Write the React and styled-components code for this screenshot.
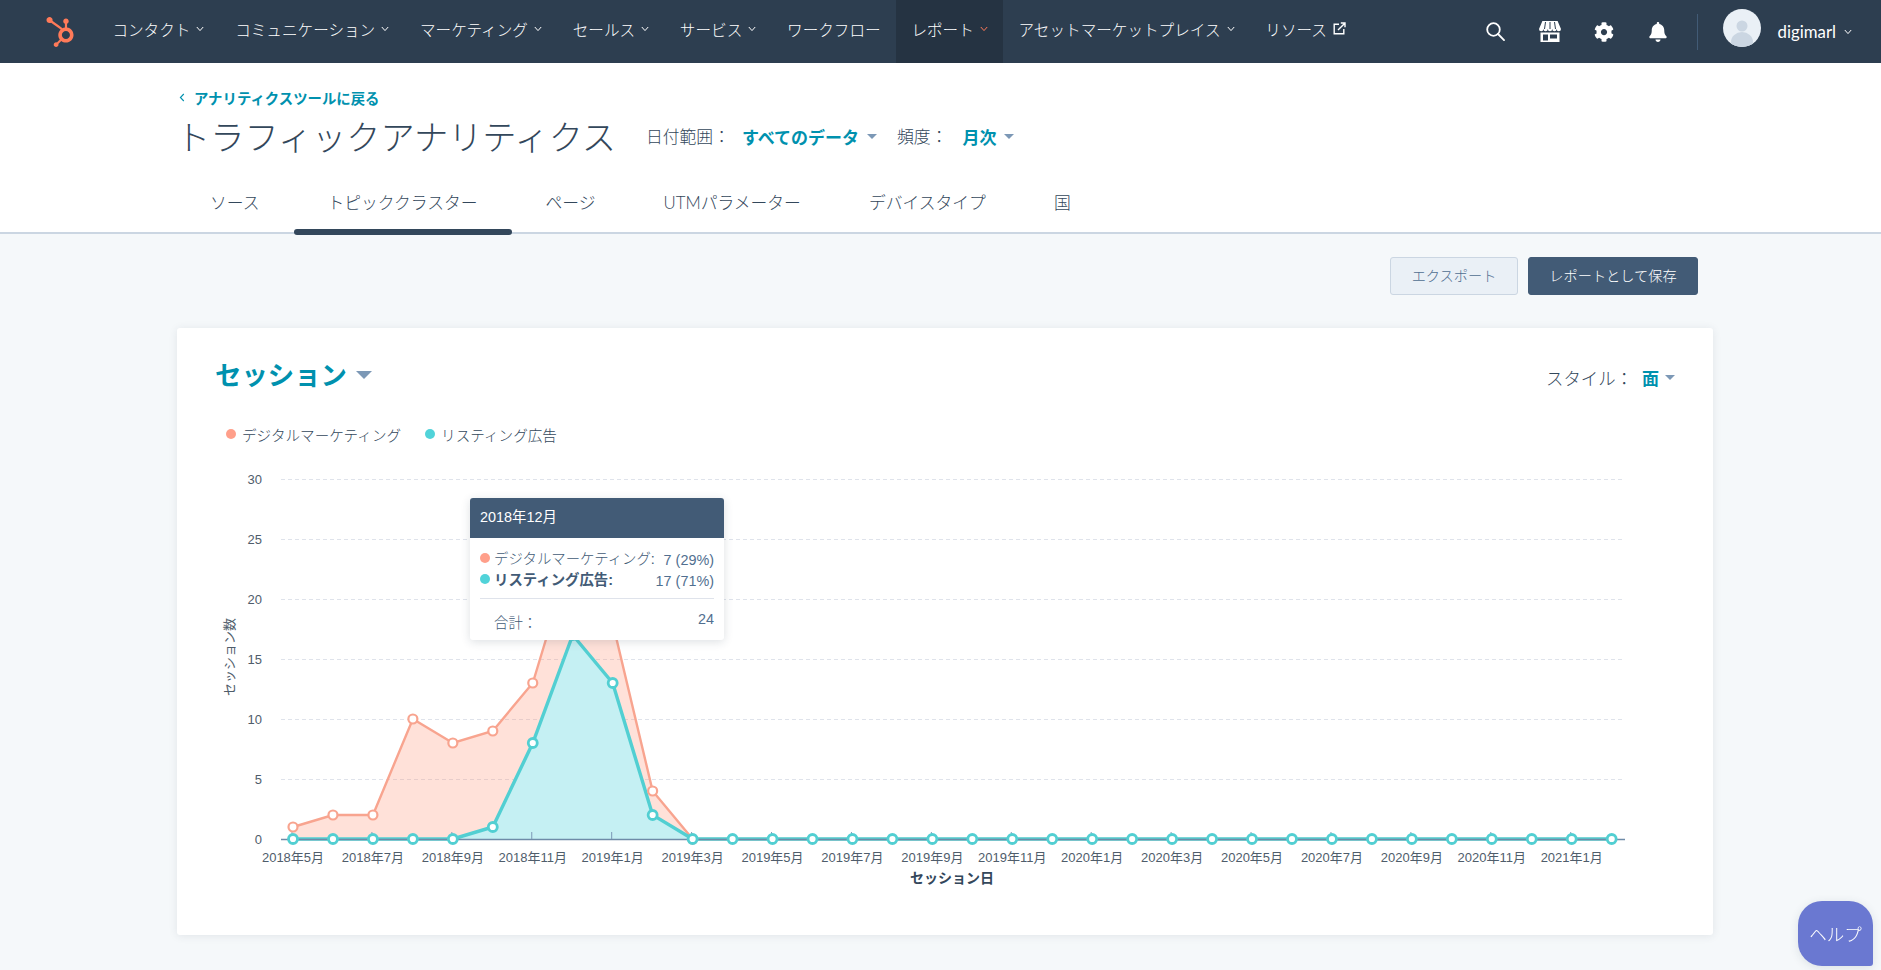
import React from 'react';
import styled, { createGlobalStyle } from 'styled-components';
import { FaHubspot, FaCog, FaBell } from 'react-icons/fa';

const JP = '"Lato", "Noto Sans CJK JP", sans-serif';
const CHART_FONT = '"Liberation Sans", "Noto Sans CJK JP", sans-serif';

const GlobalStyle = createGlobalStyle`
  html, body {
    margin: 0;
    padding: 0;
    background: #f5f8fa;
    color: #33475b;
    font-family: ${JP};
  }
`;

const Nav = styled.header`
  display: flex;
  align-items: stretch;
  height: 63px;
  background: #2d3e50;
  padding-left: 45px;
  padding-right: 29px;
`;

const Logo = styled.div`
  display: flex;
  align-items: center;
  width: 52px;
  color: #ff7a59;
  font-size: 30px;
`;

const NavItem = styled.a`
  display: flex;
  align-items: center;
  gap: 6px;
  padding: 0 15.4px 6px;
  color: #fff;
  font-size: 15.6px;
  font-weight: 300;
  white-space: nowrap;
  background: ${(p) => (p.$active ? '#253342' : 'transparent')};
`;

const NavRight = styled.div`
  display: flex;
  align-items: center;
  margin-left: auto;
`;

const IconButton = styled.span`
  display: flex;
  align-items: center;
  justify-content: center;
  width: 54px;
  color: #fff;
  font-size: 20px;
`;

const NavDivider = styled.span`
  width: 1px;
  height: 36px;
  margin: 0 25px 0 12px;
  background: #425b76;
`;

const AvatarBox = styled.span`
  display: block;
  height: 38px;
  margin-bottom: 7px;
`;

const UserName = styled.span`
  display: flex;
  align-items: center;
  gap: 8px;
  margin-left: 17px;
  color: #fff;
  font-size: 16.8px;
`;

const Head = styled.section`
  background: #fff;
  border-bottom: 2px solid #cbd6e2;
  padding: 25px 0 0 177px;
`;

const BackLink = styled.a`
  display: flex;
  align-items: center;
  gap: 9px;
  height: 18px;
  margin-left: 2px;
  color: #0091ae;
  font-size: 14.4px;
  font-weight: 700;
`;

const TitleRow = styled.div`
  display: flex;
  align-items: center;
  height: 46px;
  margin-top: 6px;
`;

const Title = styled.h1`
  margin: 0 30px 0 -1px;
  font-size: 34.2px;
  font-weight: 300;
  color: #33475b;
  white-space: nowrap;
`;

const FilterLabel = styled.span`
  padding-top: 2px;
  font-size: 16.8px;
  font-weight: 300;
  margin-right: ${(p) => p.$gap || 12}px;
`;

const FilterValue = styled.span`
  display: flex;
  align-items: center;
  gap: 8px;
  padding-top: 2px;
  margin-right: 20px;
  color: #0091ae;
  font-size: 17px;
  font-weight: 700;
`;

const Caret = styled.i`
  display: block;
  width: 0;
  height: 0;
  border-left: ${(p) => p.$size || 5}px solid transparent;
  border-right: ${(p) => p.$size || 5}px solid transparent;
  border-top: ${(p) => p.$size || 5}px solid #7c98b6;
`;

const Tabs = styled.nav`
  display: flex;
  height: 42px;
  margin: 32px 0 0 -1px;
`;

const Tab = styled.a`
  position: relative;
  padding: 1px 34px 0;
  line-height: 24px;
  font-size: 16.8px;
  font-weight: 300;
  color: #33475b;
  white-space: nowrap;

  &::after {
    content: '';
    display: ${(p) => (p.$active ? 'block' : 'none')};
    position: absolute;
    left: 0;
    right: 0;
    bottom: -3px;
    height: 6px;
    border-radius: 3px;
    background: #33475b;
  }
`;

const Actions = styled.div`
  display: flex;
  justify-content: flex-end;
  gap: 10px;
  padding: 23px 183px 33px 0;
`;

const Button = styled.button`
  height: 38px;
  width: ${(p) => p.$w}px;
  padding: 0 0 3px;
  border-radius: 3px;
  font-family: inherit;
  font-size: 14.2px;
  font-weight: 300;
  border: 1px solid ${(p) => (p.$primary ? '#425b76' : '#cbd6e2')};
  background: ${(p) => (p.$primary ? '#425b76' : '#eaf0f6')};
  color: ${(p) => (p.$primary ? '#fff' : '#506e91')};
`;

const Card = styled.main`
  margin: 0 168px 35px 177px;
  height: 607px;
  background: #fff;
  border-radius: 3px;
  box-shadow: 0 1px 8px rgba(45, 62, 80, 0.1);
`;

const CardHead = styled.div`
  display: flex;
  align-items: center;
  justify-content: space-between;
  height: 46px;
  padding: 22px 38px 0 38px;
`;

const Metric = styled.h2`
  display: flex;
  align-items: center;
  gap: 9px;
  margin: 0;
  color: #0091ae;
  font-size: 26.4px;
  font-weight: 700;
`;

const MetricCaret = styled(Caret)`
  margin-top: 3px;
`;

const StyleSwitch = styled.div`
  display: flex;
  align-items: center;
  font-size: 17.4px;
  font-weight: 300;
  margin-top: 9px;
`;

const StyleValue = styled.span`
  display: flex;
  align-items: center;
  gap: 6px;
  margin-left: 9px;
  color: #0091ae;
  font-size: 17px;
  font-weight: 700;
`;

const Legend = styled.ul`
  display: flex;
  align-items: center;
  gap: 24px;
  height: 24px;
  margin: 26px 0 0 49px;
  padding: 0;
  list-style: none;
  font-size: 14.6px;
  font-weight: 300;
  color: #33475b;
`;

const LegendItem = styled.li`
  display: flex;
  align-items: center;
  gap: 6px;
`;

const Dot = styled.i`
  display: block;
  flex: none;
  width: 10px;
  height: 10px;
  border-radius: 50%;
  background: ${(p) => p.$color};
`;

const ChartWrap = styled.div`
  position: relative;
  margin-top: 14px;
`;

const Tooltip = styled.div`
  position: absolute;
  left: 293px;
  top: 38px;
  width: 254px;
  height: 142px;
  background: #fff;
  border-radius: 3px;
  box-shadow: 0 2px 10px rgba(45, 62, 80, 0.16);
  font-family: ${CHART_FONT};
  font-size: 14.4px;
  color: #516f90;
`;

const TipHead = styled.div`
  height: 40px;
  padding-left: 10px;
  line-height: 38px;
  background: #425b76;
  border-radius: 3px 3px 0 0;
  color: #fff;
`;

const TipBody = styled.div`
  padding: 9px 10px 0;
`;

const TipRow = styled.div`
  display: flex;
  align-items: center;
  height: 21px;
  font-weight: ${(p) => (p.$bold ? 700 : 400)};
`;

const TipName = styled.span`
  margin-left: 4px;
  white-space: nowrap;
  font-weight: ${(p) => (p.$bold ? 700 : 300)};
  color: #425b76;
`;

const TipValue = styled.span`
  margin-left: auto;
  font-weight: 400;
  padding-top: 4px;
`;

const TipTotal = styled.div`
  display: flex;
  justify-content: space-between;
  margin-top: 9px;
  padding: 12px 0 0 10px;
  border-top: 1px solid #dfe3eb;
`;

const HelpButton = styled.button`
  position: fixed;
  right: 8px;
  bottom: 4px;
  width: 75px;
  height: 65px;
  padding: 0;
  border: 0;
  border-radius: 24px 24px 3px 24px;
  background: #6a78d1;
  box-shadow: 0 2px 10px rgba(45, 62, 80, 0.12);
  color: #fff;
  font-family: inherit;
  font-size: 17.5px;
  font-weight: 300;
`;

const Chevron = ({ color = '#fff' }) => (
  <svg width="8" height="6" viewBox="0 0 8 6" fill="none">
    <path d="M.8 1l3.2 3.6L7.2 1" stroke={color} strokeWidth="1" />
  </svg>
);

const SearchIcon = () => (
  <svg width="19" height="19" viewBox="0 0 19 19" fill="none" stroke="#fff" strokeWidth="1.8">
    <circle cx="7.5" cy="7.5" r="6.3" />
    <path d="M12 12l6 6.2" strokeLinecap="round" />
  </svg>
);

const StoreIcon = () => (
  <svg width="22" height="21" viewBox="0 0 22 21" fill="#fff">
    <path d="M3.4 0h15.2L22 8a2.2 2.2 0 0 1-4.4 0 2.2 2.2 0 0 1-4.4 0 2.2 2.2 0 0 1-4.4 0 2.2 2.2 0 0 1-4.4 0A2.2 2.2 0 0 1 0 8z" />
    <path d="M6.5 1L5.5 8M11 1v7M15.5 1l1 7" stroke="#2d3e50" strokeWidth="1" />
    <path fillRule="evenodd" d="M1.5 11.5h19V21h-19zM4 13.5v6h5v-6zm7 0v4h7v-4z" />
  </svg>
);

const ExternalIcon = () => (
  <svg width="13" height="13" viewBox="0 0 13 13" fill="none" stroke="#fff" strokeWidth="1.4">
    <path d="M6 2.2H1.2v9.6h9.6V7" />
    <path d="M5 8l6.6-6.6M7.8 1h4.2v4.2" />
  </svg>
);

const Avatar = () => (
  <svg width="38" height="38" viewBox="0 0 38 38">
    <defs>
      <clipPath id="avatar-clip">
        <circle cx="19" cy="19" r="19" />
      </clipPath>
    </defs>
    <circle cx="19" cy="19" r="19" fill="#eaf0f6" />
    <g clipPath="url(#avatar-clip)" fill="#cbd6e2">
      <circle cx="19" cy="17" r="5.5" />
      <ellipse cx="19" cy="33" rx="11" ry="10" />
    </g>
  </svg>
);

const navLinks = ['コンタクト', 'コミュニケーション', 'マーケティング', 'セールス', 'サービス'];

// 座標はチャート領域の左上が原点
const X0 = 116;
const STEP = 39.96;
const Y0 = 379;
const UNIT = 12;
const px = (i) => X0 + i * STEP;
const py = (v) => Y0 - v * UNIT;

const listing = [0, 0, 0, 0, 0, 1, 8, 17, 13, 2];
const digital = [1, 2, 2, 10, 8, 9, 13, 24, 18, 4];
const POINTS = 34;
const at = (arr, i) => (i < arr.length ? arr[i] : 0);
const indexes = Array.from({ length: POINTS }, (_, i) => i);

const linePath = (arr) => indexes.map((i) => `${i ? 'L' : 'M'}${px(i)} ${py(at(arr, i))}`).join('');
const areaPath = (arr) => `${linePath(arr)}L${px(POINTS - 1)} ${Y0}L${px(0)} ${Y0}Z`;

const months = (i) => {
  const m = 4 + i;
  return `${2018 + Math.floor(m / 12)}年${(m % 12) + 1}月`;
};

const Chart = () => (
  <svg width="1536" height="475" viewBox="0 0 1536 475" style={{ display: 'block' }}>
    <g fontFamily={CHART_FONT} fontSize="13" fill="#4f5d6b">
      {[5, 10, 15, 20, 25, 30].map((v) => (
        <line key={v} x1="104" x2="1448" y1={py(v) + 0.5} y2={py(v) + 0.5} stroke="#dfe3eb" strokeDasharray="4 3" />
      ))}
      {[0, 5, 10, 15, 20, 25, 30].map((v) => (
        <text key={v} x="85" y={py(v) + 4.5} textAnchor="end">{v}</text>
      ))}
      <path d={areaPath(digital)} fill="#ff8f73" fillOpacity="0.27" />
      <path d={areaPath(listing)} fill="#c5f0f3" />
      <path d={linePath(digital)} fill="none" stroke="#f8a48f" strokeWidth="2.4" />
      <path d={linePath(listing)} fill="none" stroke="#52cfd2" strokeWidth="3.4" />
      <line x1="104" x2="1448" y1={Y0 + 0.5} y2={Y0 + 0.5} stroke="#6f8ba8" strokeWidth="1.4" />
      {indexes.filter((i) => i % 2 === 0).map((i) => (
        <g key={i}>
          <line x1={px(i) - 1} x2={px(i) - 1} y1={Y0 - 7} y2={Y0} stroke="#7c98b6" />
          <text x={px(i)} y={Y0 + 23} textAnchor="middle">{months(i)}</text>
        </g>
      ))}
      {indexes.slice(0, 11).map((i) => (
        <circle key={i} cx={px(i)} cy={py(at(digital, i))} r="4.5" fill="#fff" stroke="#f8a48f" strokeWidth="2.2" />
      ))}
      {indexes.map((i) => (
        <circle key={i} cx={px(i)} cy={py(at(listing, i))} r="4.5" fill="#fff" stroke="#52cfd2" strokeWidth="2.8" />
      ))}
      <text x="775" y={Y0 + 44} textAnchor="middle" fontSize="14" fontWeight="700" fill="#33475b">セッション日</text>
      <text transform="translate(57 197) rotate(-90)" textAnchor="middle">セッション数</text>
    </g>
  </svg>
);

export default function App() {
  return (
    <>
      <GlobalStyle />
      <Nav>
        <Logo><FaHubspot /></Logo>
        {navLinks.map((label) => (
          <NavItem key={label}>{label}<Chevron /></NavItem>
        ))}
        <NavItem>ワークフロー</NavItem>
        <NavItem $active>レポート<Chevron color="#ff7a59" /></NavItem>
        <NavItem>アセットマーケットプレイス<Chevron /></NavItem>
        <NavItem>リソース<ExternalIcon /></NavItem>
        <NavRight>
          <IconButton><SearchIcon /></IconButton>
          <IconButton><StoreIcon /></IconButton>
          <IconButton><FaCog /></IconButton>
          <IconButton><FaBell /></IconButton>
          <NavDivider />
          <AvatarBox><Avatar /></AvatarBox>
          <UserName>digimarl<Chevron /></UserName>
        </NavRight>
      </Nav>

      <Head>
        <BackLink>
          <svg width="6" height="9" viewBox="0 0 6 9" fill="none">
            <path d="M4.8 1L1.4 4.5 4.8 8" stroke="#0091ae" strokeWidth="1.1" />
          </svg>
          アナリティクスツールに戻る
        </BackLink>
        <TitleRow>
          <Title>トラフィックアナリティクス</Title>
          <FilterLabel>日付範囲：</FilterLabel>
          <FilterValue>すべてのデータ<Caret /></FilterValue>
          <FilterLabel $gap={15}>頻度：</FilterLabel>
          <FilterValue>月次<Caret /></FilterValue>
        </TitleRow>
        <Tabs>
          <Tab>ソース</Tab>
          <Tab $active>トピッククラスター</Tab>
          <Tab>ページ</Tab>
          <Tab>UTMパラメーター</Tab>
          <Tab>デバイスタイプ</Tab>
          <Tab>国</Tab>
        </Tabs>
      </Head>

      <Actions>
        <Button $w={128}>エクスポート</Button>
        <Button $primary $w={170}>レポートとして保存</Button>
      </Actions>

      <Card>
        <CardHead>
          <Metric>セッション<MetricCaret $size={8} /></Metric>
          <StyleSwitch>
            スタイル：
            <StyleValue>面<Caret /></StyleValue>
          </StyleSwitch>
        </CardHead>
        <Legend>
          <LegendItem><Dot $color="#ff9f8a" />デジタルマーケティング</LegendItem>
          <LegendItem><Dot $color="#51d3d9" />リスティング広告</LegendItem>
        </Legend>
        <ChartWrap>
          <Chart />
          <Tooltip>
            <TipHead>2018年12月</TipHead>
            <TipBody>
              <TipRow><Dot $color="#ff9f8a" /><TipName>デジタルマーケティング:</TipName><TipValue>7 (29%)</TipValue></TipRow>
              <TipRow $bold><Dot $color="#51d3d9" /><TipName $bold>リスティング広告:</TipName><TipValue>17 (71%)</TipValue></TipRow>
              <TipTotal><TipName>合計：</TipName><span>24</span></TipTotal>
            </TipBody>
          </Tooltip>
        </ChartWrap>
      </Card>

      <HelpButton>ヘルプ</HelpButton>
    </>
  );
}
